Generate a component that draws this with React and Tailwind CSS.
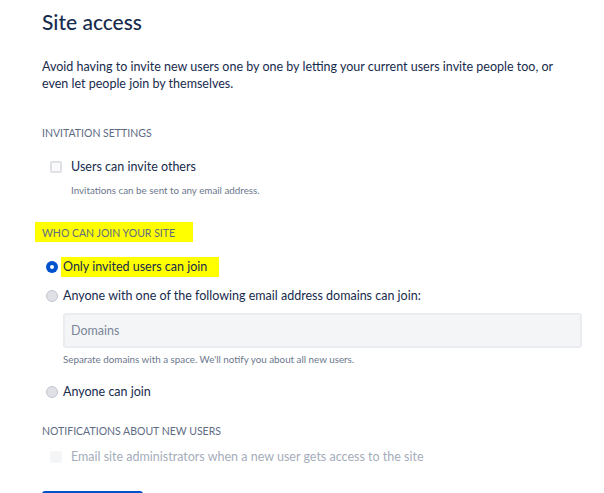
import React, { useState } from 'react';

const Radio = ({ checked }) => (
  <span
    className={`inline-flex items-center justify-center w-[12px] h-[12px] rounded-full shrink-0 ${
      checked ? 'bg-[#0052cc]' : 'bg-[#dfe1e6] border border-[#c1c7d0]'
    }`}
  >
    {checked && <span className="w-[4px] h-[4px] rounded-full bg-white" />}
  </span>
);

const Checkbox = ({ disabled }) => (
  <span
    className={`inline-block w-[12px] h-[12px] rounded-[2px] shrink-0 ${
      disabled ? 'bg-[#f4f5f7]' : 'bg-[#fafbfc] border-2 border-[#dfe1e6]'
    }`}
  />
);

const App = () => {
  const [domains, setDomains] = useState('');

  return (
    <div className="w-[604px] h-[493px] overflow-hidden bg-white text-[#172b4d] pl-[42px] pt-[8px] whitespace-nowrap font-['Lato','Noto_Sans',sans-serif]">
      <h1 className="text-[21px] leading-[28px] font-medium">Site access</h1>

      <p className="mt-[22px] text-[12.5px] leading-[17px]">
        Avoid having to invite new users one by one by letting your current users invite people too, or
        <br />
        even let people join by themselves.
      </p>

      {/* Invitation settings */}
      <div className="mt-[33px] text-[10.5px] leading-[16px] text-[#5e6c84]">INVITATION SETTINGS</div>
      <label className="mt-[16px] ml-[8px] flex items-center gap-[9px] h-[20px] text-[12.5px]">
        <Checkbox />
        <span>Users can invite others</span>
      </label>
      <div className="mt-[6px] ml-[29px] text-[9.8px] leading-[14px] text-[#6b778c]">
        Invitations can be sent to any email address.
      </div>

      {/* Who can join */}
      <div className="mt-[25px] -ml-[7px] w-[158px] h-[20px] bg-[#ffff00] pl-[7px] pt-[3px] text-[10.5px] leading-[16px] text-[#5e6c84]">
        WHO CAN JOIN YOUR SITE
      </div>
      <div className="mt-[15px] ml-[4px] flex items-center gap-[3px] h-[20px] text-[12.5px]">
        <Radio checked />
        <span className="bg-[#ffff00] h-[20px] w-[158px] pl-[2px] leading-[20px]">Only invited users can join</span>
      </div>
      <div className="mt-[9px] ml-[4px] flex items-center gap-[5px] h-[20px] text-[12.5px]">
        <Radio />
        <span>Anyone with one of the following email address domains can join:</span>
      </div>
      <input
        value={domains}
        onChange={(e) => setDomains(e.target.value)}
        placeholder="Domains"
        className="mt-[7px] ml-[21px] block w-[519px] h-[35px] rounded-[3px] bg-[#f4f5f7] border-2 border-[#ebecf0] px-[6px] text-[12.5px] placeholder:text-[#7a869a] outline-none"
      />
      <div className="mt-[4px] ml-[21px] text-[9.8px] leading-[14px] text-[#6b778c]">
        Separate domains with a space. We'll notify you about all new users.
      </div>
      <div className="mt-[16px] ml-[4px] flex items-center gap-[5px] h-[20px] text-[12.5px]">
        <Radio />
        <span>Anyone can join</span>
      </div>

      {/* Notifications */}
      <div className="mt-[21px] text-[10.5px] leading-[16px] text-[#5e6c84]">NOTIFICATIONS ABOUT NEW USERS</div>
      <label className="mt-[8px] ml-[8px] flex items-center gap-[9px] h-[20px] text-[12.5px] text-[#a5adba]">
        <Checkbox disabled />
        <span>Email site administrators when a new user gets access to the site</span>
      </label>

      <button className="mt-[24px] block w-[101px] h-[32px] rounded-[3px] bg-[#0052cc] text-white text-[12.5px]">
        Save
      </button>
    </div>
  );
};

export default App;
